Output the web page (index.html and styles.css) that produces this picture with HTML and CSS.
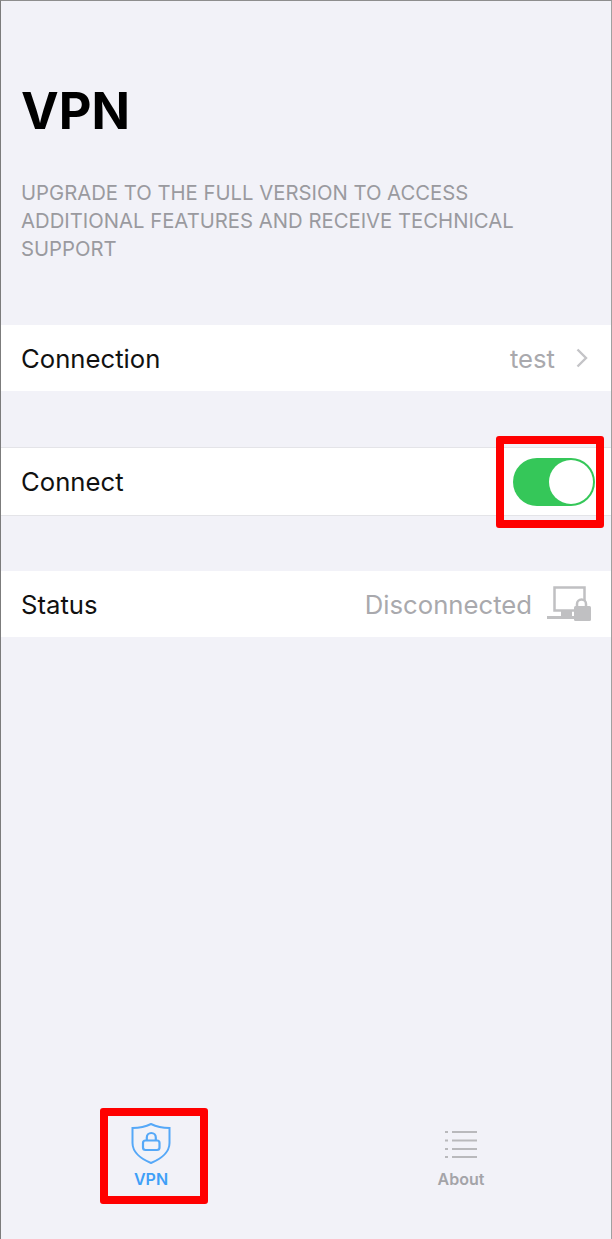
FILE: index.html
```html
<!DOCTYPE html>
<html lang="en">
<head>
    <meta charset="UTF-8">
    <meta name="viewport" content="width=device-width, initial-scale=1.0">
    <title>VPN</title>
    <link rel="stylesheet" href="styles.css">
</head>
<body>
    <div class="screen">
        <h1 class="title">VPN</h1>
        <p class="description">UPGRADE TO THE FULL VERSION TO ACCESS ADDITIONAL FEATURES AND RECEIVE TECHNICAL SUPPORT</p>

        <!-- Settings rows -->
        <div class="row row-connection">
            <span class="label">Connection</span>
            <span class="value">test</span>
            <svg class="chevron" width="14" height="20" viewBox="0 0 14 20"><path d="M2.500 1.500l8.500 8.500-8.500 8.500" fill="none" stroke="#c4c4c7" stroke-width="2.400"/></svg>
        </div>
        <div class="row row-connect">
            <span class="label">Connect</span>
            <div class="toggle"><div class="knob"></div></div>
        </div>
        <div class="row row-status">
            <span class="label">Status</span>
            <span class="value">Disconnected</span>
            <svg class="status-icon" width="44" height="36" viewBox="0 0 44 36">
                <path d="M7.500 1.500h30v23h-30z" fill="none" stroke="#c0c0c2" stroke-width="2.500"/>
                <path d="M0 33v-3h14v-5h11v5h3v3z" fill="#c0c0c2"/>
                <path d="M30 21v-3a4.500 4.500 0 0 1 9 0v3" fill="#fff" stroke="#c0c0c2" stroke-width="2.500"/>
                <rect x="27" y="20" width="17" height="15" rx="1.500" fill="#c0c0c2"/>
            </svg>
        </div>

        <!-- Tab bar -->
        <div class="tabbar">
            <div class="tab tab-active">
                <svg width="40" height="42" viewBox="0 0 40 42" fill="none" stroke="#55a8f8">
                    <path d="M1.500 5c7 0 13.500-1.500 18.500-4 5 2.500 11.500 4 18.500 4v15c0 9-8.500 16-18.500 20C10 36 1.500 29 1.500 20z" stroke-width="2"/>
                    <rect x="12" y="17.500" width="16.500" height="9.500" rx="2.500" stroke-width="2.200"/>
                    <path d="M15.800 17.500v-3a4.500 4.500 0 0 1 9 0v3" stroke-width="2.200"/>
                </svg>
                <span class="tab-label">VPN</span>
            </div>
            <div class="tab">
                <svg width="34" height="30" viewBox="0 0 34 30" fill="none" stroke="#b9b9bc" stroke-width="2">
                    <path d="M1 3h3M8 3h25M1 11.500h3M8 11.500h25M1 20h3M8 20h25M1 28h3M8 28h25"/>
                </svg>
                <span class="tab-label">About</span>
            </div>
        </div>

        <!-- Red highlight boxes -->
        <div class="mark mark-toggle"></div>
        <div class="mark mark-tab"></div>
    </div>
</body>
</html>
```

FILE: styles.css
```css
* {
    margin: 0;
    padding: 0;
    box-sizing: border-box;
}
body {
    font-family: Inter, "Liberation Sans", sans-serif;
    background-color: #f2f2f8;
}
.screen {
    position: relative;
    width: 612px;
    height: 1239px;
    display: flex;
    flex-direction: column;
    background-color: #f2f2f8;
    border-top: 1px solid #8e8e8e;
    border-left: 1px solid #7c7c7c;
    border-right: 1px solid #a0a0a0;
}
.title {
    margin-top: 80px;
    padding-left: 20px;
    font-size: 50.500px;
    line-height: 60px;
    font-weight: 700;
    color: #000;
}
.description {
    margin-top: 38px;
    padding: 0 60px 0 20px;
    font-size: 20.300px;
    line-height: 28px;
    color: #9a9a9f;
}
.row {
    display: flex;
    align-items: center;
    background: #fff;
    padding: 0 22px 0 20px;
    height: 66px;
}
.row-connection {
    margin-top: 62px;
}
.row-connect {
    margin-top: 56px;
    height: 69px;
    padding-right: 16px;
    border-top: 1px solid #e4e4e8;
    border-bottom: 1px solid #e4e4e8;
}
.row-status {
    margin-top: 55px;
    padding-right: 20px;
}
.label {
    flex: 1;
    font-size: 25.700px;
    color: #111;
}
.value {
    font-size: 25.700px;
    color: #a9a9ad;
}
.chevron {
    margin-left: 20px;
}
.toggle {
    width: 82px;
    height: 48px;
    border-radius: 24px;
    background: #35c759;
    padding: 2px;
    display: flex;
    justify-content: flex-end;
}
.knob {
    width: 44px;
    height: 44px;
    border-radius: 50%;
    background: #fff;
}
.status-icon {
    margin-left: 15px;
}
.tabbar {
    margin-top: auto;
    display: flex;
    gap: 10px;
    height: 116px;
}
.tab {
    flex: 1;
    display: flex;
    flex-direction: column;
    align-items: center;
    color: #a4a4a8;
}
.tab svg {
    height: 42px;
}
.tab-label {
    margin-top: 5px;
    font-size: 16px;
    line-height: 18px;
    font-weight: 600;
}
.tab-active {
    color: #3f9ff7;
}
.mark {
    position: absolute;
    border: 8px solid #f00;
    border-radius: 3px;
}
.mark-toggle {
    left: 495px;
    top: 435px;
    width: 108px;
    height: 92px;
}
.mark-tab {
    left: 99px;
    top: 1107px;
    width: 108px;
    height: 96px;
}
```
